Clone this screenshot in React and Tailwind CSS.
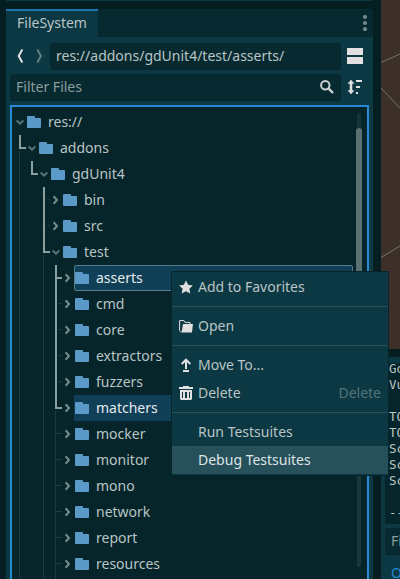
import React from "react";

const treeRows = [
  { name: "res://", pad: "pl-1", open: true },
  { name: "addons", pad: "pl-4", open: true },
  { name: "gdUnit4", pad: "pl-7", open: true },
  { name: "bin", pad: "pl-10" },
  { name: "src", pad: "pl-10" },
  { name: "test", pad: "pl-10", open: true },
  { name: "asserts", pad: "pl-13", selected: true, focused: true },
  { name: "cmd", pad: "pl-13" },
  { name: "core", pad: "pl-13" },
  { name: "extractors", pad: "pl-13" },
  { name: "fuzzers", pad: "pl-13" },
  { name: "matchers", pad: "pl-13", selected: true },
  { name: "mocker", pad: "pl-13" },
  { name: "monitor", pad: "pl-13" },
  { name: "mono", pad: "pl-13" },
  { name: "network", pad: "pl-13" },
  { name: "report", pad: "pl-13" },
  { name: "resources", pad: "pl-13" },
];

function Folder() {
  return (
    <svg className="h-3 w-3.5 shrink-0" viewBox="0 0 14 12" fill="#5b9ac8">
      <path d="M0 1.2Q0 0 1 0H6.8Q8 0 8 1V2H13Q14 2 14 3V11Q14 12 13 12H1Q0 12 0 11Z" />
    </svg>
  );
}

function Arrow({ open }) {
  return (
    <svg className="h-3 w-2 shrink-0" viewBox="0 0 8 12" fill="none" stroke={open ? "#587476" : "#768b8c"} strokeWidth="2">
      <path d={open ? "M0.7 4.5L4 7.7L7.3 4.5" : "M1.6 2.3L5 6L1.6 9.7"} />
    </svg>
  );
}

// Indentation guides; the bright ones lead to the selected folders.
function Guides() {
  return (
    <svg className="pointer-events-none absolute left-0 top-0 h-[472px] w-[60px]" viewBox="12 107 60 472" shapeRendering="crispEdges" fill="none">
      <path
        stroke="#1c3c40"
        d="M19.5 151V579M43.5 255V579M55.5 411V579M47 199.5H50M47 225.5H50M59 303.5H62M59 329.5H62M59 355.5H62M59 381.5H62M56 433.5H62M56 459.5H62M56 485.5H62M56 511.5H62M56 537.5H62M56 563.5H62"
      />
      <path
        stroke="#8c9f9f"
        strokeWidth="2"
        d="M20 135V148H26M32 161V174H38M44 187V252H50M56 265V408H62M56 278H62"
      />
    </svg>
  );
}

function Tree() {
  return (
    <div className="relative ml-1 mt-1 flex h-[475px] w-[359px] shrink-0 overflow-hidden border-2 border-b-0 border-[#2689d3] bg-[#05252a]">
      <Guides />
      <div className="w-[341px] shrink-0 pt-0.5">
        {treeRows.map((row) => (
          <div key={row.name} className={`flex h-[26px] items-center ${row.pad}`}>
            <Arrow open={row.open} />
            <div
              className={`ml-0.5 flex h-[26px] flex-1 items-center gap-[7px] ${
                row.focused ? "rounded-[2px] border border-[#587b89] bg-[#0f4058]" : row.selected ? "border border-transparent bg-[#0f4058]" : "border border-transparent"
              } ${row.selected ? "text-[#e6eaeb]" : ""}`}
            >
              <Folder />
              <span>{row.name}</span>
            </div>
          </div>
        ))}
      </div>
      <div className="ml-[3px] mt-1.5 flex w-1.5 flex-col items-center">
        <div className="h-[15px] w-1 rounded-t bg-[#153539]" />
        <div className="h-[300px] w-1.5 rounded-full bg-[#587173]" />
        <div className="h-[139px] w-1 rounded-b bg-[#1a373b]" />
      </div>
    </div>
  );
}

function MenuItem({ icon, label, shortcut, active }) {
  return (
    <div className={`flex h-7 items-center pl-[7px] pr-[7px] ${active ? "bg-[#27515a] text-[#dce4e5]" : ""}`}>
      <span className="flex w-[19px] items-center">{icon}</span>
      <span className="flex-1">{label}</span>
      {shortcut && <span className="text-[#557479]">{shortcut}</span>}
    </div>
  );
}

function Separator() {
  return (
    <div className="flex h-[11px] items-center">
      <div className="h-px w-full bg-[#27515a]" />
    </div>
  );
}

function ContextMenu() {
  return (
    <div className="absolute left-[171px] top-[271px] h-[205px] w-[218px] border border-[#06242a] bg-[#0b3842] pt-px">
      <MenuItem
        label="Add to Favorites"
        icon={
          <svg className="h-3.5 w-3.5" viewBox="0 0 14 14" fill="#e0e0e0">
            <path d="M7 .4L9.1 4.7L13.8 5.4L10.4 8.7L11.3 13.4L7 11.2L2.7 13.4L3.6 8.7L.2 5.4L4.9 4.7Z" />
          </svg>
        }
      />
      <Separator />
      <MenuItem
        label="Open"
        icon={
          <svg className="h-3.5 w-3.5" viewBox="0 0 14 14">
            <path d="M1.4 12.8L.6 11.7V1.6H5L6 3.4H11V5" fill="none" stroke="#e0e0e0" />
            <path d="M4 5H14L13 13Q12.9 13.5 12 13.5H1.5Q2.7 13 3 11Z" fill="#e0e0e0" />
          </svg>
        }
      />
      <Separator />
      <MenuItem
        label="Move To..."
        icon={
          <svg className="h-3.5 w-3.5" viewBox="0 0 14 14" fill="none" stroke="#e0e0e0" strokeWidth="2">
            <path d="M7 11V1.8M2.7 6L7 1.7L11.3 6M4 13H10" />
          </svg>
        }
      />
      <MenuItem
        label="Delete"
        shortcut="Delete"
        icon={
          <svg className="h-3.5 w-3.5" viewBox="0 0 14 14" fill="#e0e0e0">
            <path fillRule="evenodd" d="M4 0H10V1H14V3H0V1H4ZM1 4H13V13L12 14H2L1 13ZM3 6V12H4V6ZM6 6V12H8V6ZM10 6V12H11V6Z" />
          </svg>
        }
      />
      <Separator />
      <MenuItem label="Run Testsuites" />
      <MenuItem label="Debug Testsuites" active />
    </div>
  );
}

function FileSystemDock() {
  return (
    <div className="flex w-[381px] shrink-0 flex-col pl-1.5 pr-2">
      <div className="mb-2 h-px w-[366px] bg-[#0b3842]" />
      <div className="flex h-7 shrink-0 items-start justify-between rounded-tr-[3px] bg-[#072a30]">
        <div className="flex h-7 w-[92px] items-center border-t-2 border-[#1f74ad] bg-[#0b3842] pb-0.5 pl-[11px]">FileSystem</div>
        <svg className="mr-[5px] mt-1.5 h-4 w-1.5" viewBox="0 0 6 16" fill="#72878a">
          <circle cx="3" cy="2" r="2.1" />
          <circle cx="3" cy="8" r="2.1" />
          <circle cx="3" cy="14" r="2.1" />
        </svg>
      </div>
      <div className="flex h-[542px] flex-col bg-[#0b3842] pt-1.5">
        <div className="flex h-[27px] shrink-0 items-center">
          <svg className="mb-px ml-2.5 h-4 w-7 shrink-0" viewBox="0 0 28 16" fill="none" strokeWidth="2">
            <path d="M6.3 1.5L2.7 8L6.3 14.5" stroke="#e0e0e0" />
            <path d="M21.3 1.5L24.9 8L21.3 14.5" stroke="#627f84" />
          </svg>
          <div className="ml-1.5 flex h-[27px] w-[291px] items-center rounded-[3px] border-b border-[#06242a] bg-[#072a30] pl-1.5">
            res://addons/gdUnit4/test/asserts/
          </div>
          <div className="mb-[2px] ml-1.5 flex flex-col gap-0.5">
            <div className="h-[7px] w-4 bg-[#e0e0e0]" />
            <div className="h-[7px] w-4 bg-[#e0e0e0]" />
          </div>
        </div>
        <div className="mt-1 flex h-[27px] shrink-0 items-center pl-1">
          <div className="flex h-[27px] w-[331px] items-center justify-between rounded-[3px] border-b border-[#06242a] bg-[#072a30] pl-1.5 pr-[7px] text-[#8b9d9e]">
            <span>Filter Files</span>
            <svg className="h-3.5 w-3.5" viewBox="0 0 14 14" fill="none" stroke="#cbd1d1" strokeWidth="2">
              <circle cx="5.3" cy="5.3" r="4.2" />
              <path d="M8.4 8.4L13 13" strokeWidth="2.3" />
            </svg>
          </div>
          <svg className="mb-px ml-1.5 h-4 w-4" viewBox="0 0 16 16" fill="#e0e0e0">
            <path d="M4 1L7 4.5H5V11.5H7L4 15L1 11.5H3V4.5H1Z" stroke="#e0e0e0" strokeWidth=".5" />
            <path d="M9 1H15V3H9ZM9 7H13V9H9ZM9 13H11V15H9Z" />
          </svg>
        </div>
        <Tree />
      </div>
    </div>
  );
}

function MainColumn() {
  return (
    <div className="flex w-[19px] flex-col overflow-hidden whitespace-nowrap">
      <svg className="h-[349px] w-[19px] shrink-0 bg-[#3d3028]" viewBox="0 0 19 349" stroke="#777370">
        <path d="M0 62.5L19 54M0 88L19 108M0 257.5L19 246" />
      </svg>
      <div className="mt-2 flex h-[222px] shrink-0 flex-col bg-[#0b3842] pl-1 pt-1.5">
        <div className="flex h-[161px] shrink-0 rounded-bl-[3px] bg-[#05252a] pl-1">
          <pre className="-mt-0.5 font-['DejaVu_Sans_Mono','Liberation_Mono',monospace] text-[12.5px] leading-4 text-[#b9c4c5]">
            {"Godot\nVulkan\n\nTODO\nTODO\nScan\nScan\nScan\n\n----"}
          </pre>
        </div>
        <div className="mt-1 flex h-[27px] shrink-0 items-center rounded-l-[3px] border-b border-[#06242a] bg-[#072a30] pl-1.5 text-[#8b9d9e]">Filter</div>
        <div className="mt-2 pl-1.5 leading-5 text-[#2689d3]">Output</div>
      </div>
    </div>
  );
}

export default function App() {
  return (
    <div className="relative flex h-[579px] w-[400px] overflow-hidden bg-[#051e22] font-['Noto_Sans','Open_Sans',sans-serif] text-[14px] leading-5 text-[#b9c4c5]">
      <FileSystemDock />
      <MainColumn />
      <ContextMenu />
    </div>
  );
}
